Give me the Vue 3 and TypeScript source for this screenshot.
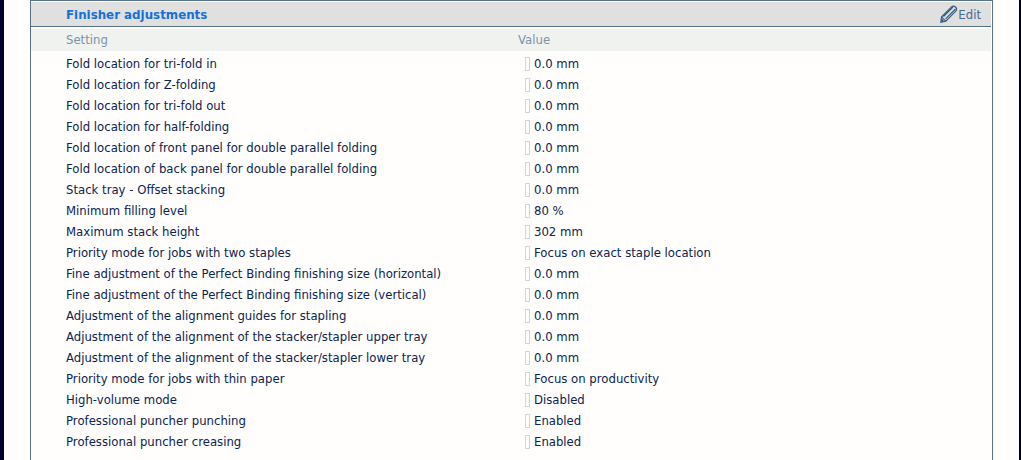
<script setup lang="ts">
const rows: [string, string][] = [
  ['Fold location for tri-fold in', '0.0 mm'],
  ['Fold location for Z-folding', '0.0 mm'],
  ['Fold location for tri-fold out', '0.0 mm'],
  ['Fold location for half-folding', '0.0 mm'],
  ['Fold location of front panel for double parallel folding', '0.0 mm'],
  ['Fold location of back panel for double parallel folding', '0.0 mm'],
  ['Stack tray - Offset stacking', '0.0 mm'],
  ['Minimum filling level', '80 %'],
  ['Maximum stack height', '302 mm'],
  ['Priority mode for jobs with two staples', 'Focus on exact staple location'],
  ['Fine adjustment of the Perfect Binding finishing size (horizontal)', '0.0 mm'],
  ['Fine adjustment of the Perfect Binding finishing size (vertical)', '0.0 mm'],
  ['Adjustment of the alignment guides for stapling', '0.0 mm'],
  ['Adjustment of the alignment of the stacker/stapler upper tray', '0.0 mm'],
  ['Adjustment of the alignment of the stacker/stapler lower tray', '0.0 mm'],
  ['Priority mode for jobs with thin paper', 'Focus on productivity'],
  ['High-volume mode', 'Disabled'],
  ['Professional puncher punching', 'Enabled'],
  ['Professional puncher creasing', 'Enabled'],
]
</script>

<template>
  <div class="page">
    <section class="panel">
      <header class="head">
        <h2 class="title">Finisher adjustments</h2>
        <a class="edit">
          <svg class="pencil" width="18" height="18" viewBox="0 0 18 18" fill="none" stroke="#33587f" stroke-width="1.1">
            <path d="M1.5 12 L12 1.5 Q13.5 0.5 15.5 2 Q17.5 4 16 6 L5.8 16.2 L0.8 17.2 Z" />
            <path d="M3.5 11.5 L13 2.2 M5.5 13.8 L15.5 4 M1.6 12.2 L5.8 16.2" />
            <path d="M1.2 14.5 L3.4 16.7" stroke-width="1.8" />
          </svg>
          <span>Edit</span>
        </a>
      </header>
      <div class="cols">
        <span class="c1">Setting</span>
        <span class="c2">Value</span>
      </div>
      <div class="body">
        <div v-for="r in rows" :key="r[0]" class="row">
          <span class="c1">{{ r[0] }}</span>
          <span class="c2 val"><i class="mark"></i>{{ r[1] }}</span>
        </div>
      </div>
    </section>
  </div>
</template>

<style>
html, body { margin: 0; background: #fff; }
</style>

<style scoped>
.page {
  box-sizing: border-box;
  width: 1021px;
  height: 460px;
  overflow: hidden;
  background: #fffefd;
  border-left: 4px solid #00002e;
  border-right: 2px solid #00002e;
  padding: 0 26px;
  font-family: "DejaVu Sans", sans-serif;
  font-size: 11.7px;
}
.panel {
  box-sizing: border-box;
  width: 963px;
  height: 460px;
  border: 1px solid #55738f;
  border-bottom: 0;
  padding: 1px 1px 0 0;
}
.head {
  box-sizing: border-box;
  display: flex;
  justify-content: space-between;
  align-items: center;
  height: 25px;
  background: #e0e0de;
  border-bottom: 1px solid #55738f;
  padding: 1px 10px 0 35px;
}
.title {
  margin: 0;
  font-size: 11.85px;
  font-weight: 700;
  color: #1570d8;
}
.edit {
  display: flex;
  align-items: center;
  color: #4a6a90;
}
.pencil { margin-top: -2px; }
.cols {
  display: grid;
  grid-template-columns: 452px 1fr;
  align-items: center;
  margin-top: 2px;
  height: 22px;
  padding-left: 35px;
  background: #f0f2f0;
  color: #7b93ab;
}
.body { padding-top: 2px; }
.row {
  display: grid;
  grid-template-columns: 452px 1fr;
  align-items: center;
  height: 21px;
  padding-left: 35px;
  color: #0c2450;
}
.val {
  display: flex;
  align-items: center;
  margin-left: 7px;
}
.mark {
  box-sizing: border-box;
  width: 5px;
  height: 14px;
  border: 1px solid #d2d6da;
  margin-right: 4px;
}
</style>
